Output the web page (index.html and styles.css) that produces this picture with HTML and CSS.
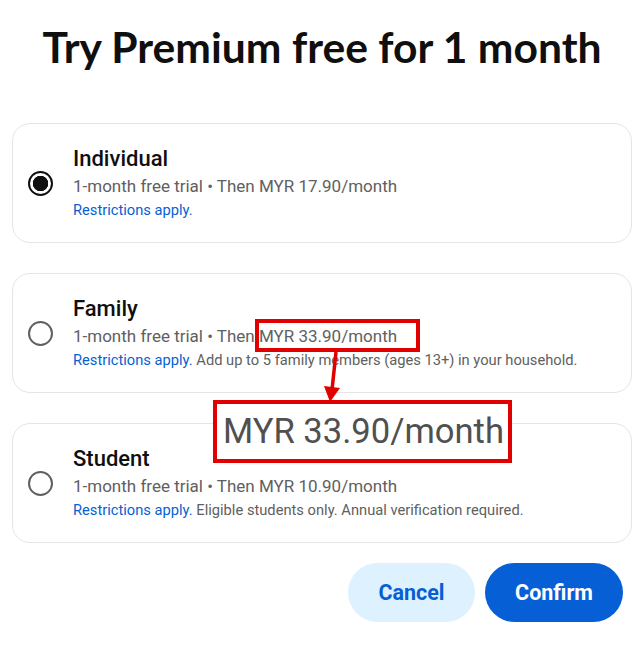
FILE: index.html
```html
<!DOCTYPE html>
<html lang="en">
<head>
    <meta charset="UTF-8">
    <meta name="viewport" content="width=device-width, initial-scale=1.0">
    <title>Try Premium free for 1 month</title>
    <link rel="stylesheet" href="styles.css">
</head>
<body>
    <div class="dialog">
        <h1 class="title">Try Premium free for 1 month</h1>

        <div class="plans">
            <!-- Individual (selected) -->
            <div class="plan">
                <span class="radio checked"></span>
                <div class="plan-text">
                    <div class="plan-name">Individual</div>
                    <div class="plan-price">1-month free trial • Then MYR 17.90/month</div>
                    <div class="plan-note"><a href="#">Restrictions apply.</a></div>
                </div>
            </div>

            <!-- Family -->
            <div class="plan">
                <span class="radio"></span>
                <div class="plan-text">
                    <div class="plan-name">Family</div>
                    <div class="plan-price">1-month free trial • Then MYR 33.90/month</div>
                    <div class="plan-note"><a href="#">Restrictions apply.</a> Add up to 5 family members (ages 13+) in your household.</div>
                </div>
            </div>

            <!-- Student -->
            <div class="plan">
                <span class="radio"></span>
                <div class="plan-text">
                    <div class="plan-name">Student</div>
                    <div class="plan-price">1-month free trial • Then MYR 10.90/month</div>
                    <div class="plan-note"><a href="#">Restrictions apply.</a> Eligible students only. Annual verification required.</div>
                </div>
            </div>
        </div>

        <div class="actions">
            <button class="btn btn-cancel">Cancel</button>
            <button class="btn btn-confirm">Confirm</button>
        </div>
    </div>

    <!-- Anotação em vermelho por cima do conteúdo -->
    <div class="mark-small"></div>
    <svg class="mark-arrow" width="30" height="60" viewBox="0 0 30 60">
        <line x1="18" y1="2" x2="14" y2="40" stroke="#e00000" stroke-width="3.5"/>
        <polygon points="6,36 22,38 12,52" fill="#e00000"/>
    </svg>
    <div class="mark-big">MYR 33.90/month</div>
</body>
</html>
```

FILE: styles.css
```css
body {
    margin: 0;
    padding: 0;
    background-color: #ffffff;
    font-family: Roboto, "Liberation Sans", sans-serif;
    color: #0f0f0f;
    position: relative;
}
.dialog {
    width: 620px;
    padding: 0 6px 0 12px;
}
.title {
    margin: 0;
    padding-top: 22px;
    height: 123px;
    box-sizing: border-box;
    font-family: Lato, Roboto, sans-serif;
    font-size: 42.6px;
    font-weight: 700;
    line-height: 50px;
    text-align: center;
    color: #0f0f0f;
}
.plans {
    display: flex;
    flex-direction: column;
    gap: 30px;
}
.plan {
    display: flex;
    align-items: center;
    height: 120px;
    box-sizing: border-box;
    border: 1px solid #e5e5e5;
    border-radius: 18px;
    padding-left: 15px;
}
.radio {
    width: 25px;
    height: 25px;
    box-sizing: border-box;
    border: 2px solid #606060;
    border-radius: 50%;
    margin-right: 20px;
    flex-shrink: 0;
}
.radio.checked {
    border-color: #0f0f0f;
    background: radial-gradient(circle, #0f0f0f 0, #0f0f0f 7.5px, #ffffff 8px);
}
.plan-name {
    font-size: 22px;
    font-weight: 500;
    line-height: 28px;
}
.plan-price {
    font-size: 17px;
    line-height: 26px;
    color: #606060;
}
.plan-note {
    font-size: 14.7px;
    line-height: 22px;
    color: #606060;
}
.plan-note a {
    color: #065fd4;
    text-decoration: none;
}
.actions {
    display: flex;
    justify-content: flex-end;
    gap: 10px;
    margin-top: 20px;
    padding-right: 9px;
}
.btn {
    height: 59px;
    border: none;
    border-radius: 30px;
    font-family: Roboto, sans-serif;
    font-size: 21.5px;
    font-weight: 700;
    cursor: pointer;
}
.btn-cancel {
    width: 127px;
    background-color: #def1ff;
    color: #065fd4;
}
.btn-confirm {
    width: 138px;
    background-color: #065fd4;
    color: #ffffff;
}
.mark-small {
    position: absolute;
    left: 255px;
    top: 319px;
    width: 165px;
    height: 33px;
    box-sizing: border-box;
    border: 4px solid #e00000;
}
.mark-arrow {
    position: absolute;
    left: 318px;
    top: 350px;
}
.mark-big {
    position: absolute;
    left: 213px;
    top: 400px;
    width: 299px;
    height: 63px;
    box-sizing: border-box;
    border: 4px solid #e00000;
    background-color: #ffffff;
    font-size: 34.6px;
    line-height: 55px;
    padding-left: 6px;
    color: #505050;
}
```
